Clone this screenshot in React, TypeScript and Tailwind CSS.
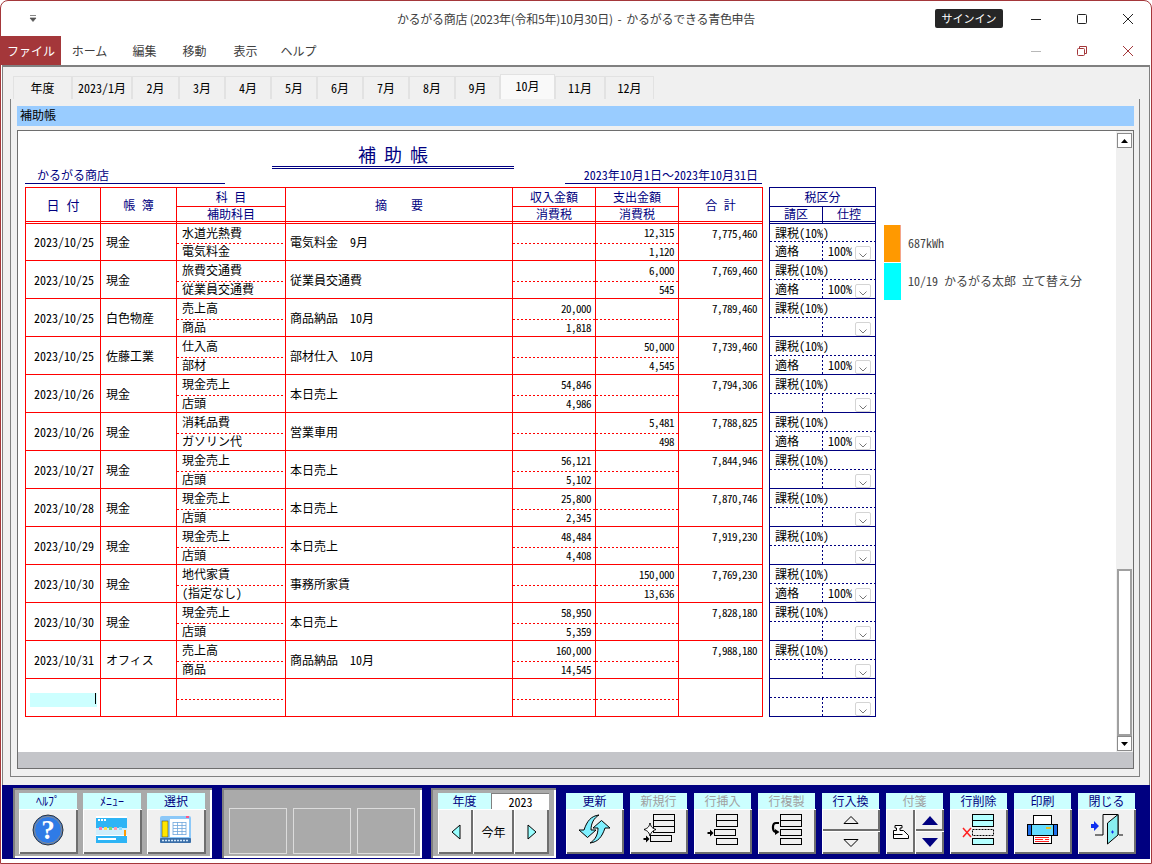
import type { ReactNode } from "react";

const RED_COLS = "grid grid-cols-[75px_76px_109px_227px_83px_83px_84px] border-b border-[#ff0000]";
// hwid gives the CJK font's own half width latin, one half em per character
const NUM = "font-['Noto_Sans_CJK_JP',sans-serif] [font-feature-settings:'hwid'] text-[11px] tracking-[-0.5px]";
const DIGIT = "font-['Noto_Sans_CJK_JP',sans-serif] [font-feature-settings:'hwid'] text-[12px]";

interface Entry {
  date: string;
  book: string;
  acct: string;
  sub: string;
  desc: string;
  inc?: [string, string];
  out?: [string, string];
  total: string;
  qualified?: boolean;
}

const entries: Entry[] = [
  { date: "2023/10/25", book: "現金", acct: "水道光熱費", sub: "電気料金", desc: "電気料金　9月", out: ["12,315", "1,120"], total: "7,775,460", qualified: true },
  { date: "2023/10/25", book: "現金", acct: "旅費交通費", sub: "従業員交通費", desc: "従業員交通費", out: ["6,000", "545"], total: "7,769,460", qualified: true },
  { date: "2023/10/25", book: "白色物産", acct: "売上高", sub: "商品", desc: "商品納品　10月", inc: ["20,000", "1,818"], total: "7,789,460" },
  { date: "2023/10/25", book: "佐藤工業", acct: "仕入高", sub: "部材", desc: "部材仕入　10月", out: ["50,000", "4,545"], total: "7,739,460", qualified: true },
  { date: "2023/10/26", book: "現金", acct: "現金売上", sub: "店頭", desc: "本日売上", inc: ["54,846", "4,986"], total: "7,794,306" },
  { date: "2023/10/26", book: "現金", acct: "消耗品費", sub: "ガソリン代", desc: "営業車用", out: ["5,481", "498"], total: "7,788,825", qualified: true },
  { date: "2023/10/27", book: "現金", acct: "現金売上", sub: "店頭", desc: "本日売上", inc: ["56,121", "5,102"], total: "7,844,946" },
  { date: "2023/10/28", book: "現金", acct: "現金売上", sub: "店頭", desc: "本日売上", inc: ["25,800", "2,345"], total: "7,870,746" },
  { date: "2023/10/29", book: "現金", acct: "現金売上", sub: "店頭", desc: "本日売上", inc: ["48,484", "4,408"], total: "7,919,230" },
  { date: "2023/10/30", book: "現金", acct: "地代家賃", sub: "(指定なし)", desc: "事務所家賃", out: ["150,000", "13,636"], total: "7,769,230", qualified: true },
  { date: "2023/10/30", book: "現金", acct: "現金売上", sub: "店頭", desc: "本日売上", inc: ["58,950", "5,359"], total: "7,828,180" },
  { date: "2023/10/31", book: "オフィス", acct: "売上高", sub: "商品", desc: "商品納品　10月", inc: ["160,000", "14,545"], total: "7,988,180" },
];

const tabs = [
  { label: "年度", w: "w-[59px]" },
  { label: "2023/1月", w: "w-[60px]" },
  { label: "2月", w: "w-[47px]" },
  { label: "3月", w: "w-[46px]" },
  { label: "4月", w: "w-[46px]" },
  { label: "5月", w: "w-[46px]" },
  { label: "6月", w: "w-[46px]" },
  { label: "7月", w: "w-[46px]" },
  { label: "8月", w: "w-[46px]" },
  { label: "9月", w: "w-[45px]" },
  { label: "10月", w: "w-[55px]", active: true },
  { label: "11月", w: "w-[50px]" },
  { label: "12月", w: "w-[49px]" },
];

// half width digits in the picture are narrower than the CJK font's own
function Mixed({ s, cls = DIGIT }: { s: string; cls?: string }) {
  const parts = s.match(/[\x20-\x7e]+|[^\x20-\x7e]+/g) ?? [];
  return (
    <>
      {parts.map((p, i) =>
        /^[\x20-\x7e]/.test(p) ? (
          <span key={i} className={cls}>
            {p}
          </span>
        ) : (
          <span key={i}>{p}</span>
        )
      )}
    </>
  );
}

function RedDash() {
  return <div className="h-px shrink-0 bg-[repeating-linear-gradient(90deg,#ff0000_0_2px,transparent_2px_4px)]" />;
}

function NavyDash() {
  return <div className="h-px shrink-0 bg-[repeating-linear-gradient(90deg,#000080_0_2px,transparent_2px_4px)]" />;
}

function SplitCell({ top, bottom, first, right }: { top?: string; bottom?: string; first?: boolean; right?: boolean }) {
  const align = right ? "justify-end pr-[4px] pb-[2px] " + NUM : "pl-[5px] pb-[2px]";
  return (
    <div className="flex flex-col border-r border-[#ff0000] text-black">
      <div className={`flex items-center ${first ? "h-[19px]" : "h-[20px]"} ${align}`}>{top}</div>
      <RedDash />
      <div className={`flex flex-1 items-center ${align}`}>{bottom && <Mixed s={bottom} cls={right ? NUM : DIGIT} />}</div>
    </div>
  );
}

function Row({ e, first }: { e?: Entry; first?: boolean }) {
  return (
    <div className={`${RED_COLS} ${first ? "h-[37px]" : "h-[38px]"}`}>
      <div className="flex items-center justify-center border-r border-[#ff0000]">
        {e ? (
          <span className={`${DIGIT} ml-[2px]`}>{e.date}</span>
        ) : (
          <div className="mt-[4px] flex h-[14px] w-[67px] justify-end bg-[#ccffff] pr-[1px]">
            <div className="h-[11px] w-px bg-black" />
          </div>
        )}
      </div>
      <div className="flex items-center border-r border-[#ff0000] pl-[5px]">{e?.book}</div>
      <SplitCell top={e?.acct} bottom={e?.sub} first={first} />
      <div className="flex items-center border-r border-[#ff0000] pl-[4px]">{e && <Mixed s={e.desc} />}</div>
      <SplitCell top={e?.inc?.[0]} bottom={e?.inc?.[1]} first={first} right />
      <SplitCell top={e?.out?.[0]} bottom={e?.out?.[1]} first={first} right />
      <div className={`border-r border-[#ff0000] pr-[5px] text-right ${NUM} leading-[18px]`}>{e?.total}</div>
    </div>
  );
}

function TaxRow({ e, first, blank }: { e?: Entry; first?: boolean; blank?: boolean }) {
  return (
    <div className="flex w-[106px] flex-col border-r border-b border-[#000080]">
      <div className={`flex items-center pl-[5px] ${first ? "h-[17px]" : "h-[18px]"}`}>{!blank && <Mixed s="課税(10%)" />}</div>
      <NavyDash />
      <div className="flex h-[18px]">
        <div className="flex w-[52px] items-center pl-[5px]">{e?.qualified && "適格"}</div>
        <div className="h-full w-px bg-[repeating-linear-gradient(180deg,#000080_0_2px,transparent_2px_4px)]" />
        <div className="flex flex-1 items-end justify-end pr-[4px]">
          {e?.qualified && <span className={`${DIGIT} mr-[3px] self-center`}>100%</span>}
          <div className="flex h-[14px] w-[16px] items-center justify-center rounded-[2px] border border-[#d4d4d4] bg-white">
            <svg width="10" height="6" viewBox="0 0 10 6" className="mt-[3px]">
              <path d="M1.5 1.5 5 5l3.5-3.5" fill="none" stroke="#777" strokeWidth="1" />
            </svg>
          </div>
        </div>
      </div>
    </div>
  );
}

function Label({ text, off, wide }: { text: string; off?: boolean; wide?: boolean }) {
  return (
    <div
      className={`flex h-[16px] items-center justify-center bg-[#ccffff] text-[12px] ${wide ? "w-[58px]" : "w-[57px]"} ${
        off ? "text-[#a0a0a0]" : "text-[#000080]"
      }`}
    >
      {text}
    </div>
  );
}

const BEVEL = "bg-[#f0f0f0] shadow-[inset_1px_1px_0_#fff,inset_-2px_-2px_0_#6e6e6e]";

function Icon({ children }: { children: ReactNode }) {
  return (
    <svg viewBox="0 0 58 45" className="block h-[45px] w-full">
      {children}
    </svg>
  );
}

function Tool({ label, off, children }: { label: string; off?: boolean; children: ReactNode }) {
  return (
    <div className="w-[58px]">
      <Label text={label} off={off} />
      <div className={`h-[45px] ${BEVEL}`}>{children}</div>
    </div>
  );
}

function SideTool({ label, children }: { label: string; children: ReactNode }) {
  return (
    <div className="w-[59px]">
      <Label text={label} wide />
      <div className={`h-[45px] ${BEVEL}`}>
        <svg viewBox="0 0 59 45" className="block h-[45px] w-full">
          {children}
        </svg>
      </div>
    </div>
  );
}

function RowRect({ x, y, fill = "none", dash }: { x: number; y: number; fill?: string; dash?: boolean }) {
  return (
    <rect x={x + 0.5} y={y + 0.5} width="21" height="6" fill={fill} stroke="#000" strokeWidth="1" strokeDasharray={dash ? "2 1" : undefined} />
  );
}

function ArrowRight({ y }: { y: number }) {
  return <path d={`M13.5 ${y - 1}h2.5v-2.5l3.5 3.5-3.5 3.5v-2.5h-2.5z`} fill="#000" />;
}

function TitleBtn({ children }: { children: ReactNode }) {
  return <div className="flex w-[46px] justify-center">{children}</div>;
}

export default function App() {
  return (
    <div className="flex h-[864px] w-[1152px] flex-col overflow-hidden rounded-t-[8px] border border-[#a4373a] bg-white font-['Noto_Sans_CJK_JP',sans-serif] text-[12px] leading-none text-black">
      {/* title bar */}
      <div className="grid h-[35px] shrink-0 grid-cols-[1fr_auto_1fr] items-center">
        <div className="pl-[28px]">
          <svg width="8" height="7" viewBox="0 0 8 7">
            <path d="M1 0.5h6M1 3h6L4 6.5z" fill="#555" stroke="#555" strokeWidth="0.7" />
          </svg>
        </div>
        <div className="text-[12px] tracking-[-0.27px] text-[#404040]">かるがる商店 (2023年(令和5年)10月30日)&nbsp; -&nbsp; かるがるできる青色申告</div>
        <div className="flex items-center justify-end">
          <div className="mr-[10px] flex h-[19px] w-[68px] items-center justify-center rounded-[2px] bg-[#262626] text-[11px] text-white">サインイン</div>
          <TitleBtn>
            <svg width="12" height="12" viewBox="0 0 12 12">
              <path d="M1 6.5h10" stroke="#222" />
            </svg>
          </TitleBtn>
          <TitleBtn>
            <svg width="12" height="12" viewBox="0 0 12 12">
              <rect x="1.5" y="1.5" width="9" height="9" rx="1" fill="none" stroke="#222" />
            </svg>
          </TitleBtn>
          <TitleBtn>
            <svg width="12" height="12" viewBox="0 0 12 12">
              <path d="M1 1l10 10M11 1 1 11" stroke="#222" />
            </svg>
          </TitleBtn>
        </div>
      </div>

      {/* menu row */}
      <div className="flex h-[29px] shrink-0 items-stretch">
        <div className="flex w-[60px] items-center justify-center bg-[#a4373a] text-white">ファイル</div>
        <div className="flex w-[57px] items-center justify-center text-[#404040]">ホーム</div>
        <div className="flex w-[53px] items-center justify-center text-[#404040]">編集</div>
        <div className="flex w-[47px] items-center justify-center text-[#404040]">移動</div>
        <div className="flex w-[55px] items-center justify-center text-[#404040]">表示</div>
        <div className="flex w-[51px] items-center justify-center text-[#404040]">ヘルプ</div>
        <div className="ml-auto flex items-center">
          <TitleBtn>
            <svg width="12" height="12" viewBox="0 0 12 12">
              <path d="M1 6.5h10" stroke="#b8b8b8" />
            </svg>
          </TitleBtn>
          <TitleBtn>
            <svg width="12" height="12" viewBox="0 0 12 12">
              <path d="M3.5 3V1.5h7v7H9" fill="none" stroke="#a4373a" />
              <rect x="1.5" y="3.5" width="7" height="7" rx="1" fill="none" stroke="#a4373a" />
            </svg>
          </TitleBtn>
          <TitleBtn>
            <svg width="12" height="12" viewBox="0 0 12 12">
              <path d="M1 1l10 10M11 1 1 11" stroke="#a4373a" />
            </svg>
          </TitleBtn>
        </div>
      </div>
      <div className="mx-[1px] h-[2px] shrink-0 bg-[#808080]" />

      {/* form body */}
      <div className="mx-[1px] flex h-[718px] shrink-0 flex-col border-x border-[#808080] bg-[#f0f0f0] pt-[9px] pl-[7px]">
        <div className="flex h-[23px] items-end pl-[3px]">
          {tabs.map((t) => (
            <div
              key={t.label}
              className={`flex items-center justify-center border border-b-0 border-[#e2e2e2] ${t.w} ${
                t.active ? "h-[25px] bg-[#f9f9f9] pb-[2px]" : "h-[23px] bg-[#f0f0f0]"
              }`}
            >
              <Mixed s={t.label} />
            </div>
          ))}
        </div>
        <div className="flex h-[678px] w-[1130px] flex-col border-x border-b border-[#808080] pt-[7px] pl-[6px]">
          <div className="flex h-[20px] w-[1117px] items-center bg-[#99ccff] pb-[2px] pl-[3px]">補助帳</div>
          <div className="mt-[4px] flex h-[639px] w-[1117px] flex-col border border-[#6e6e6e]">
            <div className="flex h-[621px]">
              {/* paper */}
              <div className="flex-1 bg-white pl-[7px]">
                <div className="flex h-[53px] items-end text-[#000080]">
                  <div className="w-[200px] border-b border-[#000080] pb-[2px] pl-[12px]">かるがる商店</div>
                  <div className="mb-[15px] ml-[47px] w-[242px] border-b-[3px] border-double border-[#000080] pb-[3px] text-center text-[18px] [word-spacing:4px]">
                    補 助 帳
                  </div>
                  <div className="ml-[51px] w-[197px] border-b border-[#000080] pr-[4px] pb-[2px] text-right">
                    <Mixed s="2023年10月1日～2023年10月31日" />
                  </div>
                </div>

                <div className="mt-[3px] flex items-start">
                  {/* journal table */}
                  <div className="w-[738px] border-t border-l border-[#ff0000]">
                    <div className={`${RED_COLS} h-[34px] text-[#000080]`}>
                      <div className="flex items-center justify-center border-r border-[#ff0000] text-[13px] [word-spacing:4px]">日 付</div>
                      <div className="flex items-center justify-center border-r border-[#ff0000] [word-spacing:4px]">帳 簿</div>
                      <div className="flex flex-col border-r border-[#ff0000]">
                        <div className="flex h-[19px] items-center justify-center border-b border-[#ff0000] [word-spacing:4px]">科 目</div>
                        <div className="flex flex-1 items-center justify-center">補助科目</div>
                      </div>
                      <div className="flex items-center justify-center border-r border-[#ff0000]">摘　　要</div>
                      <div className="flex flex-col border-r border-[#ff0000]">
                        <div className="flex h-[19px] items-center justify-center border-b border-[#ff0000]">収入金額</div>
                        <div className="flex flex-1 items-center justify-center">消費税</div>
                      </div>
                      <div className="flex flex-col border-r border-[#ff0000]">
                        <div className="flex h-[19px] items-center justify-center border-b border-[#ff0000]">支出金額</div>
                        <div className="flex flex-1 items-center justify-center">消費税</div>
                      </div>
                      <div className="flex items-center justify-center border-r border-[#ff0000] [word-spacing:4px]">合 計</div>
                    </div>
                    <div className={`${RED_COLS} h-[2px]`}>
                      <div className="border-r border-[#ff0000]" />
                      <div className="border-r border-[#ff0000]" />
                      <div className="border-r border-[#ff0000]" />
                      <div className="border-r border-[#ff0000]" />
                      <div className="border-r border-[#ff0000]" />
                      <div className="border-r border-[#ff0000]" />
                      <div className="border-r border-[#ff0000]" />
                    </div>
                    {entries.map((e, i) => (
                      <Row key={i} e={e} first={i === 0} />
                    ))}
                    <Row />
                  </div>

                  {/* tax table */}
                  <div className="ml-[6px] w-[107px] border-t border-l border-[#000080]">
                    <div className="flex h-[19px] w-[106px] items-center justify-center border-r border-b border-[#000080] text-[#000080]">税区分</div>
                    <div className="flex h-[15px] w-[106px] border-r border-b border-[#000080] text-[#000080]">
                      <div className="flex w-[53px] items-center justify-center border-r border-[#000080]">請区</div>
                      <div className="flex flex-1 items-center justify-center">仕控</div>
                    </div>
                    <div className="flex h-[2px] w-[106px] border-r border-b border-[#000080]">
                      <div className="w-[53px] border-r border-[#000080]" />
                    </div>
                    {entries.map((e, i) => (
                      <TaxRow key={i} e={e} first={i === 0} />
                    ))}
                    <TaxRow blank />
                  </div>

                  {/* memo swatches */}
                  <div className="mt-[38px] ml-[8px] flex flex-col text-[#444]">
                    <div className="flex h-[38px] items-center">
                      <div className="mb-[1px] h-[37px] w-[17px] border-r border-[#f4a58a] bg-[#ff9900]" />
                      <span className={`mb-[3px] ml-[7px] ${DIGIT}`}>687kWh</span>
                    </div>
                    <div className="flex h-[38px] items-center">
                      <div className="mb-[1px] h-[37px] w-[17px] bg-[#00ffff]" />
                      <span className="mb-[3px] ml-[7px] whitespace-pre">
                        <Mixed s="10/19 かるがる太郎 立て替え分" />
                      </span>
                    </div>
                  </div>
                </div>
              </div>

              {/* scrollbar */}
              <div className="flex w-[17px] flex-col items-center bg-[#f0f0f0] pt-[2px]">
                <div className="flex h-[15px] w-[15px] items-center justify-center border border-[#8a8a8a] bg-white">
                  <svg width="7" height="4" viewBox="0 0 7 4">
                    <path d="M3.5 0 7 4H0z" fill="#000" />
                  </svg>
                </div>
                <div className="flex-1" />
                <div className="h-[167px] w-[15px] border-2 border-[#a0a0a0] bg-white" />
                <div className="mb-[1px] flex h-[15px] w-[15px] items-center justify-center border border-[#8a8a8a] bg-white">
                  <svg width="7" height="4" viewBox="0 0 7 4">
                    <path d="M0 0h7L3.5 4z" fill="#000" />
                  </svg>
                </div>
              </div>
            </div>
            <div className="h-[16px] bg-[#c4c5c9]" />
          </div>
        </div>
      </div>

      {/* button bar */}
      <div className="mx-[1px] flex h-[74px] shrink-0 items-start bg-[#000080] pt-[3px] pl-[11px]">
        <div className="flex h-[70px] w-[199px] gap-[5px] bg-[#aaaaaa] pt-[5px] pl-[6px] shadow-[inset_2px_2px_0_#808080,inset_-2px_-2px_0_#fff]">
          <SideTool label="ﾍﾙﾌﾟ">
            <circle cx="29" cy="21" r="15" fill="#2f7be6" stroke="#333" strokeWidth="1" />
            <circle cx="29" cy="21" r="13.5" fill="none" stroke="#8a8a8a" strokeWidth="1" />
            <text x="29" y="30" textAnchor="middle" fontSize="27" fontWeight="700" fill="#fff" fontFamily="Liberation Serif">?</text>
          </SideTool>
          <SideTool label="ﾒﾆｭｰ">
            <rect x="13" y="7" width="31" height="27" fill="#fff" />
            <rect x="13" y="9" width="31" height="10" fill="#2db4f5" />
            <rect x="15" y="10" width="2" height="2" fill="#fff" />
            <rect x="18" y="10" width="2" height="2" fill="#fff" />
            <rect x="21" y="10" width="2" height="2" fill="#fff" />
            <rect x="13" y="19" width="31" height="7" fill="#cfeefc" />
            <rect x="16" y="18" width="3" height="3" fill="#f7a" />
            <rect x="21" y="18" width="3" height="3" fill="#fd5" />
            <rect x="26" y="18" width="3" height="3" fill="#7d7" />
            <rect x="31" y="18" width="3" height="3" fill="#f9a" />
            <rect x="36" y="18" width="3" height="3" fill="#8df" />
            <rect x="41" y="21" width="2" height="6" fill="#f90" />
            <rect x="13" y="27" width="31" height="7" fill="#2db4f5" />
            <rect x="15" y="29" width="18" height="2" fill="#fff" />
          </SideTool>
          <SideTool label="選択">
            <rect x="13" y="7" width="31" height="27" rx="2" fill="#8cc8f8" />
            <rect x="15" y="12" width="6" height="16" fill="#ffe600" stroke="#333" strokeWidth="0.5" />
            <rect x="23" y="10" width="19" height="18" fill="#fff" />
            <path d="M26 13.5h13M26 16.5h13M26 19.5h13M26 22.5h13M26 25.5h13M26 13v13M30.5 13v13M35 13v13M39 13v13" stroke="#6ea6dc" strokeWidth="0.8" fill="none" />
            <rect x="13" y="29" width="31" height="5" rx="1" fill="#3a6ea8" />
            <path d="M15 31.5h27" stroke="#cfe6fa" strokeWidth="1.5" strokeDasharray="2 1" />
            <rect x="39" y="7" width="3" height="2" fill="#f58" />
          </SideTool>
        </div>

        <div className="ml-[10px] flex h-[70px] w-[200px] gap-[6px] bg-[#aaaaaa] pt-[20px] pl-[7px] shadow-[inset_2px_2px_0_#808080,inset_-2px_-2px_0_#fff]">
          <div className="h-[46px] w-[58px] border border-[#dcdcdc]" />
          <div className="h-[46px] w-[58px] border border-[#dcdcdc]" />
          <div className="h-[46px] w-[58px] border border-[#dcdcdc]" />
        </div>

        <div className="ml-[9px] h-[70px] w-[125px] bg-[#aaaaaa] pt-[5px] pl-[7px] shadow-[inset_2px_2px_0_#808080,inset_-2px_-2px_0_#fff]">
          <div className="flex">
            <div className="flex h-[16px] w-[53px] items-center justify-center bg-[#ccffff] text-[#000080]">年度</div>
            <div className={`flex h-[16px] w-[58px] items-center justify-center border-t border-l border-[#808080] bg-white ${DIGIT}`}>2023</div>
          </div>
          <div className="flex h-[45px]">
            <div className={`flex w-[35px] items-center justify-center ${BEVEL}`}>
              <svg width="10" height="16" viewBox="0 0 10 16">
                <path d="M9 1v14L1 8z" fill="#99ffff" stroke="#000" />
              </svg>
            </div>
            <div className={`flex w-[41px] items-center justify-center ${BEVEL}`}>今年</div>
            <div className={`flex w-[35px] items-center justify-center ${BEVEL}`}>
              <svg width="10" height="16" viewBox="0 0 10 16">
                <path d="M1 1v14l8-7z" fill="#99ffff" stroke="#000" />
              </svg>
            </div>
          </div>
        </div>

        <div className="ml-[10px] flex gap-[6px] pt-[5px]">
          <Tool label="更新">
            <Icon>
              <path d="M33 6C25 7 21 12 18 21h-5l8.500 7.500L30 21h-5C25 14 28 9 33 6z" fill="#7ff0ff" stroke="#000" />
              <path d="M33 6C25 7 21 12 18 21h-5l8.500 7.500L30 21h-5C25 14 28 9 33 6z" fill="#7ff0ff" stroke="#000" transform="rotate(180 28.500 20)" />
            </Icon>
          </Tool>
          <Tool label="新規行" off>
            <Icon>
              <RowRect x={23} y={5} />
              <RowRect x={23} y={11} />
              <RowRect x={23} y={17} />
              <path d="M20 14c1 4 2 5 6 6.500-4 1.500-5 3-6 6.500-1-3.500-2-5-6-6.500 4-1.500 5-2.500 6-6.500z" fill="#fff" stroke="#000" />
              <RowRect x={20} y={26} />
              <ArrowRight y={30} />
            </Icon>
          </Tool>
          <Tool label="行挿入" off>
            <Icon>
              <RowRect x={22} y={5} />
              <RowRect x={22} y={11} />
              <RowRect x={20} y={20} />
              <RowRect x={22} y={29} />
              <ArrowRight y={24} />
            </Icon>
          </Tool>
          <Tool label="行複製" off>
            <Icon>
              <RowRect x={22} y={5} />
              <RowRect x={22} y={11} />
              <RowRect x={22} y={20} />
              <RowRect x={22} y={29} />
              <path d="M21 14h-3c-4 0-4 8-0.500 9" fill="none" stroke="#000" strokeWidth="2.200" />
              <path d="M17 20l4.500 3-4.500 3z" fill="#000" />
            </Icon>
          </Tool>
          <div className="w-[58px]">
            <Label text="行入換" />
            <div className={`flex h-[22px] items-center justify-center ${BEVEL}`}>
              <svg width="16" height="8" viewBox="0 0 16 8">
                <path d="M8 .5 15 7.500H1z" fill="none" stroke="#000" />
              </svg>
            </div>
            <div className={`flex h-[23px] items-center justify-center ${BEVEL}`}>
              <svg width="16" height="8" viewBox="0 0 16 8">
                <path d="M1 .5h14l-7 7z" fill="none" stroke="#000" />
              </svg>
            </div>
          </div>
          <div className="w-[58px]">
            <Label text="付箋" off />
            <div className="flex h-[45px]">
              <div className={`flex w-[29px] items-center justify-center ${BEVEL}`}>
                <svg width="16" height="14" viewBox="0 0 16 14">
                  <path d="M.5 13.500V5.500h3V3H2V.5h7V3H7v2.500h3.500l5 5v3z" fill="#fff" stroke="#000" />
                  <path d="M.5 9.500h9" stroke="#000" />
                </svg>
              </div>
              <div className="flex w-[29px] flex-col">
                <div className={`flex h-[22px] items-center justify-center ${BEVEL}`}>
                  <svg width="16" height="9" viewBox="0 0 16 9">
                    <path d="M8 0 16 9H0z" fill="#000080" />
                  </svg>
                </div>
                <div className={`flex h-[23px] items-center justify-center ${BEVEL}`}>
                  <svg width="16" height="9" viewBox="0 0 16 9">
                    <path d="M0 0h16L8 9z" fill="#000080" />
                  </svg>
                </div>
              </div>
            </div>
          </div>
          <Tool label="行削除">
            <Icon>
              <RowRect x={22} y={5} fill="#b3ffff" />
              <RowRect x={22} y={11} fill="#b3ffff" />
              <RowRect x={22} y={20} dash />
              <RowRect x={22} y={29} fill="#b3ffff" />
              <path d="M13 19l8 9M21 19l-8 9" stroke="#ff2020" strokeWidth="1.500" />
            </Icon>
          </Tool>
          <Tool label="印刷">
            <Icon>
              <rect x="19.500" y="6.500" width="18" height="10" fill="#fff" stroke="#000" />
              <rect x="13.500" y="15.500" width="30" height="11" fill="#66ddff" stroke="#000" />
              <rect x="13.500" y="15.500" width="4" height="11" fill="#1e6ee8" stroke="#000" />
              <rect x="39.500" y="15.500" width="4" height="11" fill="#1e6ee8" stroke="#000" />
              <rect x="32" y="18" width="5" height="2" fill="#e8c020" />
              <rect x="19.500" y="26.500" width="18" height="8" fill="#fff" stroke="#000" />
              <path d="M21 28.500h14M21 30.500h8M31 30.500h4M21 32.500h14" stroke="#ff2020" strokeWidth="1" />
            </Icon>
          </Tool>
          <Tool label="閉じる">
            <Icon>
              <path d="M13 15h3v-3l5 5-5 5v-3h-3z" fill="#1030f0" />
              <path d="M17 26h8M41 26h4M25 26V5.500h15V26" fill="none" stroke="#000" />
              <path d="M29.500 14 40 5.500V26l-10.500 9z" fill="#88eef0" stroke="#000" />
              <path d="M33 23h3M34.500 21.500v3" stroke="#1030f0" />
            </Icon>
          </Tool>
        </div>
      </div>
    </div>
  );
}
